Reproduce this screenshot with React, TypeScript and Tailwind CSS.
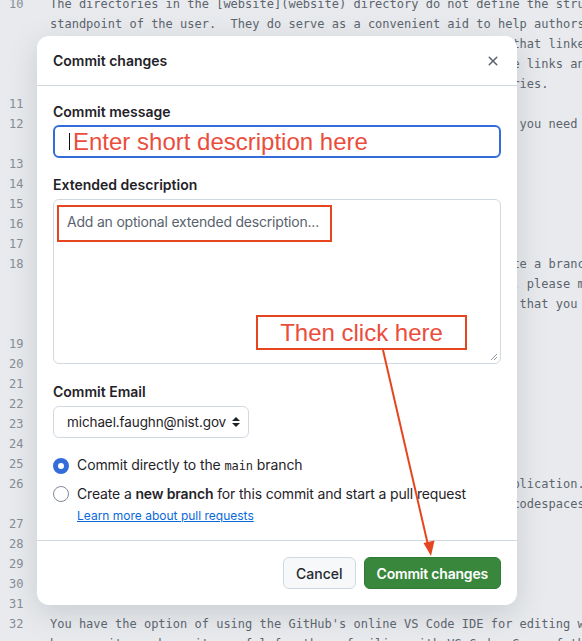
import React from 'react';

// background markdown file, dimmed behind the dialog
const lines: [number, string[]][] = [
  [10, [
    'The directories in the [website](website) directory do not define the structure of the site from the',
    'standpoint of the user.  They do serve as a convenient aid to help authors find pages, but',
    'organize the source of the site, keeping together related pages that linked to',
    'to each other. Note that the site navigation is built up from the links and the',
    'menu entries that are defined in the configs, not by the directories.',
  ]],
  [11, ['']],
  [12, [
    'To add a new page to the website, create one markdown file. Then you need to',
    'add it to the navigation menu.',
  ]],
  [13, ['']],
  [14, ['## Contributing']],
  [15, ['']],
  [16, ['Contributions to the site are welcome.']],
  [17, ['']],
  [18, [
    'If you want to propose a change to the site, you can either create a branch',
    'or fork this repository and open a pull request.  In either case, please make',
    'sure that your changes are consistent with the style guides, and that you have',
    'previewed them locally.',
  ]],
  [19, ['']],
  [20, ['## Editing']],
  [21, ['']],
  [22, ['Pages may be edited directly in the browser.']],
  [23, ['']],
  [24, ['### Local editing']],
  [25, ['']],
  [26, [
    'You may also make these edits locally by using GitHub Desktop application.',
    'Codespaces may be used too (see [Codespaces](https://github.com/codespaces/)).',
  ]],
  [27, ['']],
  [28, ['### Online editing']],
  [29, ['']],
  [30, ['See below.']],
  [31, ['']],
  [32, [
    "You have the option of using the GitHub's online VS Code IDE for editing what",
    'because it can be quite useful for those familiar with VS Code. Some of the',
  ]],
];

const XIcon = () => (
  <svg viewBox="0 0 16 16" width="16" height="16" fill="#59636e">
    <path d="M3.72 3.72a.75.75 0 0 1 1.06 0L8 6.94l3.22-3.22a.749.749 0 0 1 1.275.326.749.749 0 0 1-.215.734L9.06 8l3.22 3.22a.749.749 0 0 1-.326 1.275.749.749 0 0 1-.734-.215L8 9.06l-3.22 3.22a.751.751 0 0 1-1.042-.018.751.751 0 0 1-.018-1.042L6.94 8 3.72 4.78a.75.75 0 0 1 0-1.06Z" />
  </svg>
);

const SelectCaret = () => (
  <svg viewBox="0 0 8 12" width="8" height="12" fill="#1f2328">
    <path d="M0 5 L4 1 L8 5 Z" />
    <path d="M0 7 L4 11 L8 7 Z" />
  </svg>
);

export default function App() {
  return (
    <div className="relative h-[641px] w-[582px] overflow-hidden bg-[#e8eaed]">
      {/* code view */}
      <div className="-mt-1.5 font-['DejaVu_Sans_Mono',monospace] text-[12px]">
        {lines.map(([n, rows]) =>
          rows.map((row, i) => (
            <div key={`${n}-${i}`} className="flex h-5 leading-5">
              <span className="w-[50px] shrink-0 pl-[9px] text-[#858c95]">{i === 0 ? n : ''}</span>
              <span className="whitespace-pre text-[#5c646d]">{row}</span>
            </div>
          ))
        )}
      </div>

      {/* dialog */}
      <div className="absolute left-[37px] top-[36px] w-[480px] rounded-xl bg-white font-['Inter',sans-serif] text-[#1f2328] shadow-[0_8px_28px_rgba(110,118,129,0.25)]">
        <div className="flex h-[50px] items-center justify-between border-b border-[#d1d9e0] pl-4 pr-2">
          <h2 className="text-[14px] font-semibold leading-5">Commit changes</h2>
          <button className="flex h-8 w-8 items-center justify-center rounded-md">
            <XIcon />
          </button>
        </div>

        <div className="px-4 pb-[15px] pt-4">
          <label className="block text-[14px] font-semibold leading-5">Commit message</label>
          <div className="mt-[3px] flex h-[33px] items-center rounded-md border-2 border-[#346ddb] pl-[14px]">
            <span className="h-[17px] w-px bg-[#111]" />
            <span className="ml-[3px] font-['Liberation_Sans',Arial,sans-serif] text-[24px] leading-none text-[#eb4d3d]">
              Enter short description here
            </span>
          </div>

          <label className="mt-[17px] block text-[14px] font-semibold leading-5">Extended description</label>
          <div className="relative mt-1 h-[165px] rounded-md border border-[#d1d9e0]">
            <p className="pl-[13px] pt-[12px] text-[14px] leading-5 tracking-[-0.2px] text-[#59636e]">Add an optional extended description...</p>
            <div className="absolute left-[3px] top-[5px] h-[37px] w-[275px] border-2 border-[#e6461f]" />
            <svg className="absolute bottom-[2px] right-[2px]" width="8" height="8" viewBox="0 0 8 8" stroke="#8c959f" strokeWidth="1">
              <path d="M1 7 L7 1 M4 7 L7 4" />
            </svg>
            <div className="absolute left-[202px] top-[115px] flex h-[35px] w-[211px] items-center justify-center border-2 border-[#e6461f] font-['Liberation_Sans',Arial,sans-serif] text-[24px] leading-none text-[#eb4d3d]">
              Then click here
            </div>
          </div>

          <label className="mt-[18px] block text-[14px] font-semibold leading-5">Commit Email</label>
          <div className="mt-1 flex h-8 w-[196px] items-center justify-between rounded-md border border-[#d1d9e0] bg-white pl-[13px] pr-[8px]">
            <span className="text-[13.5px] leading-5 tracking-[-0.1px]">michael.faughn@nist.gov</span>
            <SelectCaret />
          </div>

          <div className="mt-[17px] flex flex-col gap-2">
            <div className="flex items-center gap-2">
              <span className="h-4 w-4 rounded-full border-[5px] border-[#346ddb] bg-white" />
              <span className="text-[14px] leading-5 tracking-[-0.1px]">
                Commit directly to the <code className="font-['DejaVu_Sans_Mono',monospace] text-[12px]">main</code> branch
              </span>
            </div>
            <div className="flex items-start gap-2">
              <span className="mt-[2px] h-4 w-4 shrink-0 rounded-full border border-[#818b98] bg-white" />
              <div className="flex flex-col">
                <span className="text-[14px] leading-5 tracking-[-0.15px]">
                  Create a <b className="font-semibold">new branch</b> for this commit and start a pull request
                </span>
                <a className="mt-[3px] text-[12px] leading-[18px] text-[#0969da] underline">Learn more about pull requests</a>
              </div>
            </div>
          </div>
        </div>

        <div className="flex justify-end gap-2 border-t border-[#d1d9e0] p-4">
          <button className="h-8 rounded-md border border-[#d1d9e0] bg-[#f6f8fa] px-3 text-[14px] font-medium text-[#25292e]">
            Cancel
          </button>
          <button className="h-8 rounded-md border border-[#2f7a34] bg-[#38873d] px-3 text-[14px] font-semibold tracking-[-0.2px] text-white">
            Commit changes
          </button>
        </div>
      </div>

      {/* annotation arrow */}
      <svg className="pointer-events-none absolute left-0 top-0" width="582" height="641">
        <line x1="383" y1="350" x2="428" y2="545" stroke="#e6461f" strokeWidth="2" />
        <path d="M431 556 L423.5 543 L434.5 540.5 Z" fill="#e6461f" />
      </svg>
    </div>
  );
}
